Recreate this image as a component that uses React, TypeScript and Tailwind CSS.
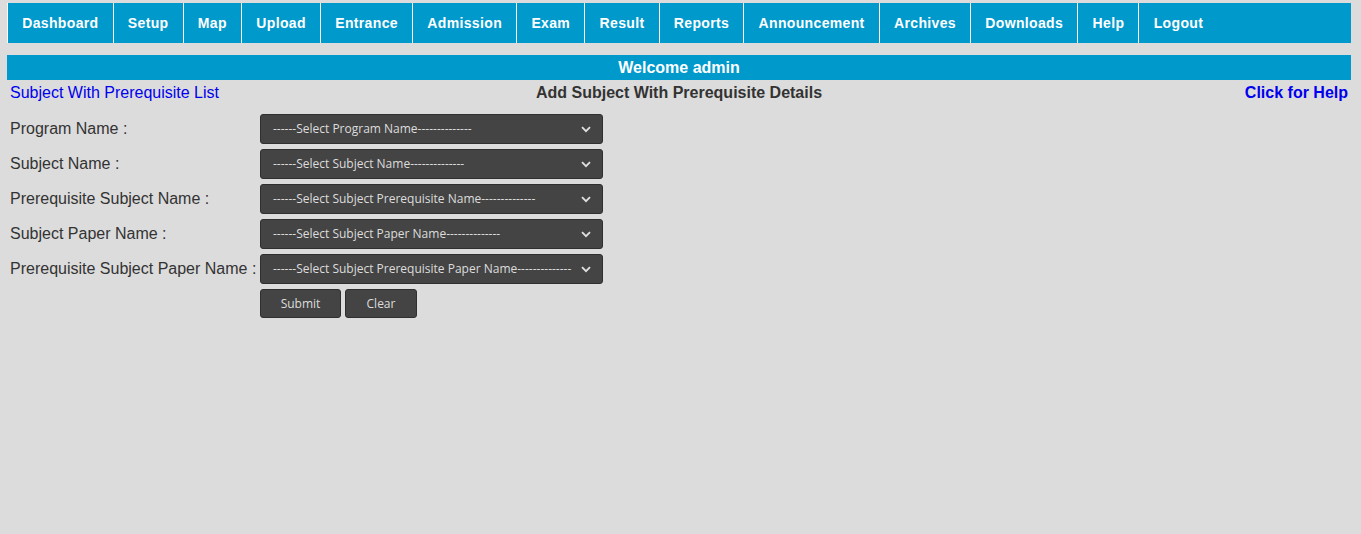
const navItems = [
  "Dashboard",
  "Setup",
  "Map",
  "Upload",
  "Entrance",
  "Admission",
  "Exam",
  "Result",
  "Reports",
  "Announcement",
  "Archives",
  "Downloads",
  "Help",
  "Logout",
];

const fields = [
  { label: "Program Name :", placeholder: "------Select Program Name--------------" },
  { label: "Subject Name :", placeholder: "------Select Subject Name--------------" },
  {
    label: "Prerequisite Subject Name :",
    placeholder: "------Select Subject Prerequisite Name--------------",
  },
  { label: "Subject Paper Name :", placeholder: "------Select Subject Paper Name--------------" },
  {
    label: "Prerequisite Subject Paper Name :",
    placeholder: "------Select Subject Prerequisite Paper Name--------------",
  },
];

function Chevron() {
  return (
    <svg width="10" height="7" viewBox="0 0 10 7" className="shrink-0">
      <path d="M1 1.2 5 5.2 9 1.2" fill="none" stroke="#e0e0e0" strokeWidth="1.8" />
    </svg>
  );
}

function FakeSelect({ placeholder }: { placeholder: string }) {
  return (
    <div className="flex h-[30px] w-[343px] items-center justify-between rounded-[3px] border border-[#2f2f2f] bg-[#444444] pr-[11px] pl-[12px] font-['Open_Sans',sans-serif] text-[12px] text-[#dddddd]">
      <span className="whitespace-nowrap">{placeholder}</span>
      <Chevron />
    </div>
  );
}

export default function App() {
  return (
    <div className="min-h-[534px] bg-[#dcdcdc] pt-[3px] pr-[10px] pl-[7px] font-['Liberation_Sans',Arial,sans-serif]">
      <nav className="flex h-[40px] bg-[#0099cc]">
        {navItems.map((item) => (
          <a
            key={item}
            className="flex items-center border-l border-white px-[14.2px] text-[14px] font-bold tracking-[0.35px] text-white"
          >
            {item}
          </a>
        ))}
      </nav>

      <div className="mt-[12px] flex h-[25px] items-center justify-center bg-[#0099cc] text-[16px] font-bold text-white">
        Welcome admin
      </div>

      <div className="mt-[1px] grid h-[21px] grid-cols-[1fr_auto_1fr] items-center px-[3px] text-[16px]">
        <a className="text-[#0000ee]">Subject With Prerequisite List</a>
        <span className="font-bold text-[#333333]">Add Subject With Prerequisite Details</span>
        <a className="text-right font-bold text-[#0000ee]">Click for Help</a>
      </div>

      <div className="mt-[12px] flex flex-col gap-[5px] pl-[3px]">
        {fields.map((f) => (
          <div key={f.label} className="flex items-center">
            <label className="w-[250px] text-[16px] text-[#333333]">{f.label}</label>
            <FakeSelect placeholder={f.placeholder} />
          </div>
        ))}
        <div className="flex gap-[4px] pl-[250px]">
          <button className="h-[29px] w-[81px] rounded-[3px] border border-[#2f2f2f] bg-[#444444] font-['Open_Sans',sans-serif] text-[12px] text-[#dddddd]">
            Submit
          </button>
          <button className="h-[29px] w-[72px] rounded-[3px] border border-[#2f2f2f] bg-[#444444] font-['Open_Sans',sans-serif] text-[12px] text-[#dddddd]">
            Clear
          </button>
        </div>
      </div>
    </div>
  );
}
